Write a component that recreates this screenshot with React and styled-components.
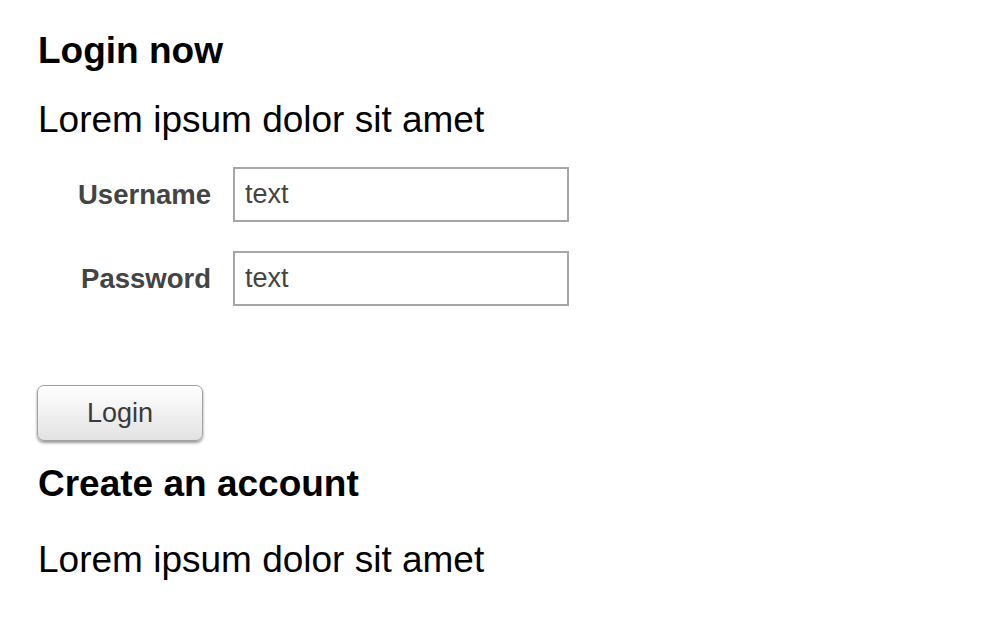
import React from "react";
import styled, { createGlobalStyle } from "styled-components";

const Global = createGlobalStyle`
  html, body { margin: 0; padding: 0; background: #fff; }
  body { font-family: "Liberation Sans", Arial, Helvetica, sans-serif; color: #000; }
`;

const Page = styled.div`
  display: flex;
  flex-direction: column;
  align-items: flex-start;
  padding: 29px 0 0 38px;
`;

const Heading = styled.h3`
  margin: ${(p) => p.$top || 0}px 0 0 0;
  font-size: 37px;
  line-height: 44px;
  font-weight: bold;
  color: #000;
`;

const Text = styled.p`
  margin: ${(p) => p.$top || 0}px 0 0 0;
  font-size: 37px;
  line-height: 44px;
  font-weight: normal;
  color: #000;
`;

const Form = styled.form`
  margin-top: 25px;
  display: grid;
  grid-template-columns: 173px 336px;
  column-gap: 22px;
  row-gap: 29px;
  align-items: center;
`;

const Label = styled.label`
  text-align: right;
  font-size: 27.5px;
  font-weight: bold;
  color: #444;
`;

const Input = styled.input`
  box-sizing: border-box;
  width: 336px;
  height: 55px;
  margin: 0;
  padding: 0 10px;
  border: 2px solid #a6a6a6;
  border-radius: 0;
  background: #fff;
  font-family: "Liberation Sans", Arial, sans-serif;
  font-size: 27px;
  color: #444;
  outline: none;
`;

const Button = styled.button`
  box-sizing: border-box;
  margin: 79px 0 0 -1px;
  width: 166px;
  height: 56px;
  border: 1px solid #a0a0a0;
  border-radius: 7px;
  background: linear-gradient(#ffffff, #f1f1f1 50%, #e2e2e2);
  box-shadow: 0 2px 3px rgba(0, 0, 0, 0.4);
  font-family: "Liberation Sans", Arial, sans-serif;
  font-size: 27px;
  color: #3a3a3a;
  padding: 0;
  cursor: pointer;
`;

export default function App() {
  return (
    <>
      <Global />
      <Page>
        <Heading>Login now</Heading>
        <Text $top={25}>Lorem ipsum dolor sit amet</Text>
        <Form onSubmit={(e) => e.preventDefault()}>
          <Label htmlFor="username">Username</Label>
          <Input id="username" defaultValue="text" />
          <Label htmlFor="password">Password</Label>
          <Input id="password" defaultValue="text" />
        </Form>
        <Button type="button">Login</Button>
        <Heading $top={21}>Create an account</Heading>
        <Text $top={32}>Lorem ipsum dolor sit amet</Text>
      </Page>
    </>
  );
}
